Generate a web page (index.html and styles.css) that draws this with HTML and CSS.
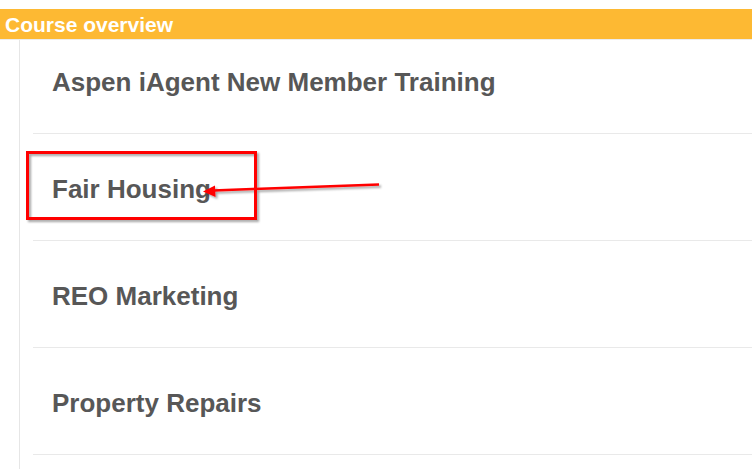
FILE: index.html
```html
<!DOCTYPE html>
<html>
  <head>
    <link rel="stylesheet" href="styles.css">
  </head>
<body>
  <!--Orange heading bar over the list of courses-->
  <div class="header">Course overview</div>
  <div class="content">
    <ul class="courses">
      <li class="course first">Aspen iAgent New Member Training</li>
      <li class="course">Fair Housing</li>
      <li class="course">REO Marketing</li>
      <li class="course">Property Repairs</li>
    </ul>
  </div>
  <!--Red box and arrow drawn over the page-->
  <svg class="markup" width="752" height="469" viewBox="0 0 752 469">
    <defs>
      <filter id="shade" x="-10%" y="-30%" width="130%" height="180%">
        <feDropShadow dx="2" dy="2" stdDeviation="1.2" flood-color="#000" flood-opacity="0.35"/>
      </filter>
    </defs>
    <g filter="url(#shade)">
      <rect x="27.5" y="152.5" width="228" height="66" fill="none" stroke="#ff0000" stroke-width="3"/>
      <line x1="379" y1="184.5" x2="213" y2="190.5" stroke="#ff0000" stroke-width="2.5"/>
      <polygon points="203,191.5 215,185.5 215.5,197" fill="#ff0000"/>
    </g>
  </svg>
</body>
</html>
```

FILE: styles.css
```css
body{
  margin: 0;
  padding-top: 9px;
  height: 460px;
  background-color: #ffffff;
  font-family: "Liberation Sans", Arial, sans-serif;
  overflow: hidden;
}
.header{
  height: 29px;
  padding: 1px 0 0 5px;
  line-height: 29px;
  background-color: #fdb933;
  color: #ffffff;
  font-size: 21px;
  font-weight: bold;
  border-bottom: 1px solid #ececec;
}
.content{
  margin-left: 19px;
  border-left: 1px solid #e6e6e6;
  height: 429px;
}
.courses{
  list-style: none;
  margin: 0;
  padding: 0 0 0 13px;
}
.course{
  padding: 41px 0 37px 19px;
  height: 28px;
  line-height: 28px;
  font-size: 26px;
  font-weight: bold;
  color: #575757;
  border-bottom: 1px solid #e9e9e9;
}
.course.first{
  padding-top: 28px;
}
.markup{
  position: absolute;
  left: 0;
  top: 0;
}
```
